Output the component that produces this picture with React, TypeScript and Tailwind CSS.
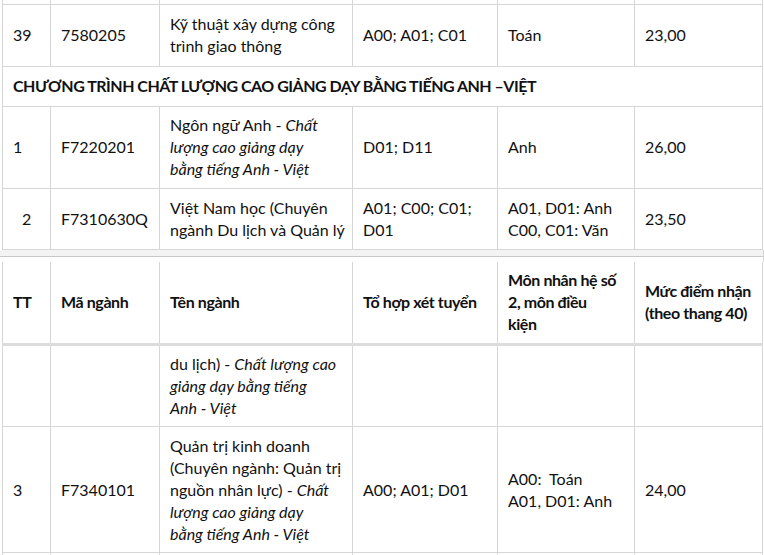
const cell = "border border-[#d6d6d6] px-[10px] align-middle whitespace-nowrap";

type Row = {
  tt: string;
  code: string;
  name: React.ReactNode;
  combo: React.ReactNode;
  subject: React.ReactNode;
  score: string;
  h: string;
  ttClass?: string;
};

const topRows: Row[] = [
  {
    tt: "39",
    code: "7580205",
    name: (
      <>
        Kỹ thuật xây dựng công
        <br />
        trình giao thông
      </>
    ),
    combo: "A00; A01; C01",
    subject: "Toán",
    score: "23,00",
    h: "h-[62px]",
  },
];

const cltRows: Row[] = [
  {
    tt: "1",
    code: "F7220201",
    name: (
      <>
        Ngôn ngữ Anh - <i>Chất</i>
        <br />
        <i>lượng cao giảng dạy</i>
        <br />
        <i>bằng tiếng Anh - Việt</i>
      </>
    ),
    combo: "D01; D11",
    subject: "Anh",
    score: "26,00",
    h: "h-[82px]",
  },
  {
    tt: "2",
    code: "F7310630Q",
    name: (
      <>
        Việt Nam học (Chuyên
        <br />
        ngành Du lịch và Quản lý
      </>
    ),
    combo: (
      <>
        A01; C00; C01;
        <br />
        D01
      </>
    ),
    subject: (
      <>
        A01, D01: Anh
        <br />
        C00, C01: Văn
      </>
    ),
    score: "23,50",
    h: "h-[61px]",
    ttClass: "pl-[19px]",
  },
];

const bottomRows: Row[] = [
  {
    tt: "",
    code: "",
    name: (
      <>
        du lịch) - <i>Chất lượng cao</i>
        <br />
        <i>giảng dạy bằng tiếng</i>
        <br />
        <i>Anh - Việt</i>
      </>
    ),
    combo: "",
    subject: "",
    score: "",
    h: "h-[82px]",
  },
  {
    tt: "3",
    code: "F7340101",
    name: (
      <>
        Quản trị kinh doanh
        <br />
        (Chuyên ngành: Quản trị
        <br />
        nguồn nhân lực) - <i>Chất</i>
        <br />
        <i>lượng cao giảng dạy</i>
        <br />
        <i>bằng tiếng Anh - Việt</i>
      </>
    ),
    combo: "A00; A01; D01",
    subject: (
      <>
        A00:&nbsp; Toán
        <br />
        A01, D01: Anh
      </>
    ),
    score: "24,00",
    h: "h-[126px]",
  },
];

function Cols() {
  return (
    <colgroup>
      <col className="w-[48px]" />
      <col className="w-[109px]" />
      <col className="w-[193px]" />
      <col className="w-[145px]" />
      <col className="w-[137px]" />
      <col />
    </colgroup>
  );
}

function DataRow({ row }: { row: Row }) {
  return (
    <tr className={row.h}>
      <td className={`${cell} ${row.ttClass ?? ""}`}>{row.tt}</td>
      <td className={cell}>{row.code}</td>
      <td className={cell}>{row.name}</td>
      <td className={cell}>{row.combo}</td>
      <td className={cell}>{row.subject}</td>
      <td className={cell}>{row.score}</td>
    </tr>
  );
}

const th = `${cell} border-t-0 border-b-[3px] border-b-[#dcdcdc] text-left font-bold tracking-[-0.4px]`;

export default function App() {
  return (
    <div className="h-[555px] w-[764px] overflow-hidden bg-white font-['Lato','Open_Sans',sans-serif] text-[16px] leading-[22px] text-[#111]">
      <div className="pl-[2px] pr-[1px]">
        <table className="w-full table-fixed border-collapse">
          <Cols />
          <tbody>
            <tr className="h-[4px]">
              <td className="border-x border-[#d6d6d6] p-0" />
              <td className="border-x border-[#d6d6d6] p-0" />
              <td className="border-x border-[#d6d6d6] p-0" />
              <td className="border-x border-[#d6d6d6] p-0" />
              <td className="border-x border-[#d6d6d6] p-0" />
              <td className="border-x border-[#d6d6d6] p-0" />
            </tr>
            {topRows.map((r) => (
              <DataRow key={r.tt} row={r} />
            ))}
            <tr className="h-[40px]">
              <td colSpan={6} className={`${cell} font-bold tracking-[-0.5px]`}>
                CHƯƠNG TRÌNH CHẤT LƯỢNG CAO GIẢNG DẠY BẰNG TIẾNG ANH –VIỆT
              </td>
            </tr>
            {cltRows.map((r) => (
              <DataRow key={r.tt} row={r} />
            ))}
          </tbody>
        </table>
      </div>

      {/* page break */}
      <div className="h-[6px] border-r border-[#d6d6d6] bg-[#f3f3f3]" />
      <div className="h-px bg-[#c9c9c9]" />
      <div className="h-[5px] border-r border-[#d6d6d6]" />

      <div className="pl-[2px] pr-[1px]">
        <table className="w-full table-fixed border-collapse">
          <Cols />
          <thead>
            <tr className="h-[83px]">
              <th className={th}>TT</th>
              <th className={th}>Mã ngành</th>
              <th className={th}>Tên ngành</th>
              <th className={th}>Tổ hợp xét tuyển</th>
              <th className={th}>
                Môn nhân hệ số
                <br />
                2, môn điều
                <br />
                kiện
              </th>
              <th className={th}>
                Mức điểm nhận
                <br />
                (theo thang 40)
              </th>
            </tr>
          </thead>
          <tbody>
            {bottomRows.map((r, i) => (
              <DataRow key={i} row={r} />
            ))}
            <tr className="h-[20px]">
              <td className={cell} />
              <td className={cell} />
              <td className={cell} />
              <td className={cell} />
              <td className={cell} />
              <td className={cell} />
            </tr>
          </tbody>
        </table>
      </div>
    </div>
  );
}
